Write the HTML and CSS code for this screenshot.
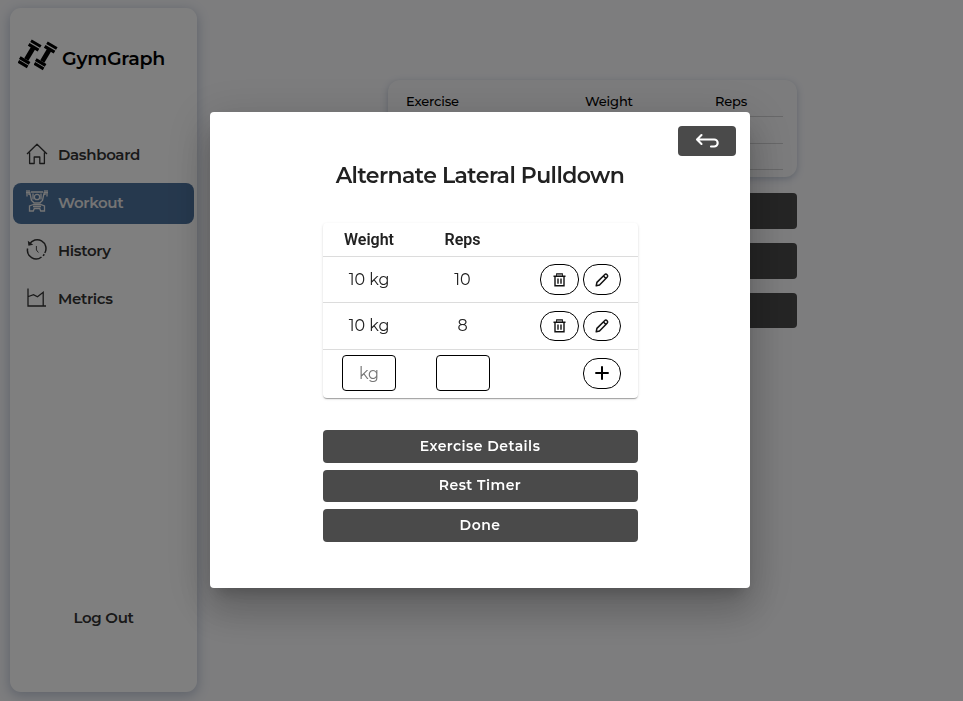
FILE: index.html
```
<!DOCTYPE html>
<html lang="en">
<head>
<meta charset="utf-8">
<title>GymGraph</title>
<link rel="stylesheet" href="styles.css">
</head>
<body>
<svg width="0" height="0" class="defs">
  <symbol id="trash" viewBox="0 0 16 16"><path d="M1.500 4.300h12M4.800 4V2h5.400v2M3 4.500v9.200h9V4.500M6 6.500v5.200M9 6.500v5.200" fill="none" stroke="currentColor" stroke-width="1.400"/><path d="M5 2h5v2H5z" fill="#777"/></symbol>
  <symbol id="pencil" viewBox="0 0 16 16"><path d="M2.200 13.800l.7-3.400 7.700-7.700a1.600 1.600 0 0 1 2.500 2.500l-7.600 7.800zM9.500 4l2.700 2.700" fill="none" stroke="currentColor" stroke-width="1.500" stroke-linejoin="round"/></symbol>
  <symbol id="dumbbell" viewBox="0 0 24 32"><path d="M8.300 21.500L15.100 10" stroke="#000" stroke-width="4.800"/><path d="M10.700 6.300l9.800 5.800M1.800 19.600l9.800 5.800" stroke="#000" stroke-width="3.300"/><path d="M13 2.700l9.800 5.800M.4 23.400l9.200 5.500" stroke="#000" stroke-width="3"/></symbol>
</svg>
<div class="page">
  <nav class="sidebar">
    <div class="brand">
      <svg class="logo" viewBox="0 0 40 34"><use href="#dumbbell" x="0" y="0" width="24" height="32"/><use href="#dumbbell" x="16" y="2" width="24" height="32"/></svg>
      <span class="brand-name">GymGraph</span>
    </div>
    <a class="item"><svg viewBox="0 0 22 22"><path d="M1 11L11 1.200 21 11M3.600 9.500V20.500H8.200V14h5.600v6.500h4.600V9.500" fill="none" stroke="currentColor" stroke-width="1.300" stroke-linejoin="round"/></svg><span class="t-dash">Dashboard</span></a>
    <a class="item active"><svg viewBox="0 0 22 22"><g fill="none" stroke="currentColor" stroke-width="1.300"><path d="M1 0v6.500M21 0v6.500M0 2.500h4.500M17.500 2.500H22M3 0v5M19 0v5M4 3.500L5.500 10.500 8 12.800h6l2.500-2.300L18 3.500M5 2h12M7 3.500v6M15 3.500v6M7.500 14.500L3.500 16v5h3.800l1-2.500h5.400l1 2.500h3.800v-5l-4-1.500zM7 16.500h8"/><circle cx="11" cy="7" r="2.700"/></g></svg><span class="t-work">Workout</span></a>
    <a class="item"><svg viewBox="0 0 22 22"><g fill="none" stroke="currentColor" stroke-width="1.500"><path d="M3.500 5.200A8.700 8.700 0 0 1 18.800 14M18.300 15.200l-1.200 1.700M15.500 18A8.700 8.700 0 0 1 1.600 9.500"/><path d="M10.400 7v4l2 2.500" stroke-width=".9"/></g><path d="M1.800 1.700l.6 5 4.800-1z" fill="currentColor"/></svg><span class="t-hist">History</span></a>
    <a class="item"><svg viewBox="0 0 22 22"><path d="M2 1.500V19H20M2.500 9.500l5-1.900 4 2.200 5.700-4.500v13.700" fill="none" stroke="currentColor" stroke-width="1.300"/></svg><span class="t-metr">Metrics</span></a>
    <a class="logout">Log Out</a>
  </nav>
  <main class="content">
    <section class="card">
      <div class="card-row head"><span>Exercise</span><span>Weight</span><span>Reps</span></div>
      <div class="card-row"></div>
      <div class="card-row"></div>
    </section>
    <div class="bar"></div><div class="bar"></div><div class="bar last"></div>
  </main>
</div>
<div class="overlay">
  <div class="dialog">
    <div class="top"><button class="back"><svg viewBox="0 0 24 16"><path d="M6.500 2L2 6.500 6.500 11M2.500 6.500h16.700a3.500 3.500 0 0 1 0 7H16" fill="none" stroke="#fff" stroke-width="2.100" stroke-linecap="round" stroke-linejoin="round"/></svg></button></div>
    <h2 class="title">Alternate Lateral Pulldown</h2>
    <div class="sets">
      <div class="row head"><span>Weight</span><span>Reps</span></div>
      <div class="row first"><span>10 kg</span><span>10</span><div class="actions"><button class="pill wide"><svg><use href="#trash"/></svg></button><button class="pill"><svg><use href="#pencil"/></svg></button></div></div>
      <div class="row second"><span>10 kg</span><span>8</span><div class="actions"><button class="pill wide"><svg><use href="#trash"/></svg></button><button class="pill"><svg><use href="#pencil"/></svg></button></div></div>
      <div class="row"><input class="field" placeholder="kg"><input class="field"><div class="actions"><button class="pill"><svg viewBox="0 0 16 16"><path d="M8 1.300v13.400M1.300 8h13.400" stroke="#000" stroke-width="2"/></svg></button></div></div>
    </div>
    <div class="buttons">
      <button>Exercise Details</button>
      <button>Rest Timer</button>
      <button>Done</button>
    </div>
  </div>
</div>
</body>
</html>
```
FILE: styles.css
```
* { box-sizing: border-box; }
body { margin: 0; height: 701px; overflow: hidden; background: #fafafd; color: #212121; font-family: Montserrat, Inter, "Liberation Sans", sans-serif; }
button { border: 0; padding: 0; font: inherit; }
.defs { position: absolute; }
.page { display: flex; height: 701px; padding: 8px 0 9px 10px; }
.sidebar { display: flex; flex-direction: column; width: 187px; background: #fff; border-radius: 11px; box-shadow: 0 3px 12px 1px rgba(60, 85, 130, .3); padding: 30px 3px 0; }
.brand { display: flex; align-items: center; height: 34px; margin-bottom: 87px; padding-left: 5px; color: #000; }
.logo { width: 40px; height: 34px; }
.brand-name { margin: 6px 0 0 4px; font-size: 19px; font-weight: 600; letter-spacing: -.25px; }
.item { display: flex; align-items: center; height: 41px; margin-bottom: 7px; padding-left: 13px; border-radius: 8px; font-size: 15px; font-weight: 600; color: #333; }
.item:nth-of-type(1) { margin-top: -24px; }
.item svg { width: 22px; height: 22px; margin: -3px 10px 0 0; flex: none; }
.item.active svg { margin-top: -5px; }
.item span { margin-top: -2px; }
.item.active { background: #4d729d; color: #e8e8e8; }
.t-dash { letter-spacing: -.33px; }
.t-work { letter-spacing: -.35px; }
.t-hist { letter-spacing: -.35px; }
.t-metr { letter-spacing: -.35px; }
.logout { margin: auto 0 64px; text-align: center; font-size: 15px; font-weight: 600; line-height: 20px; letter-spacing: -.3px; color: #333; }
.content { width: 409px; margin: 72px 0 0 191px; }
.card { height: 97px; margin-bottom: 16px; padding: 7px 14px 0; border-radius: 12px; background: #f8f9fa; box-shadow: 0 2px 7px rgba(60, 85, 130, .3); }
.card-row { height: 26.500px; border-bottom: 1px solid #d0d0d2; font-size: 13px; font-weight: 500; color: #000; }
.card-row.head { display: grid; grid-template-columns: 179px 130px 1fr; height: 30px; padding-left: 4px; line-height: 29px; letter-spacing: -.15px; }
.bar { height: 36px; margin-bottom: 14px; border-radius: 4px; background: #4a4a4a; }
.bar.last { height: 35px; }
.overlay { position: fixed; inset: 0; display: flex; justify-content: center; align-items: center; padding: 0 3px 1px 0; background: rgba(0, 0, 0, .5); }
.dialog { width: 540px; height: 476px; border-radius: 4px; background: #fff; box-shadow: 0 11px 15px -7px rgba(0,0,0,.2), 0 24px 38px 3px rgba(0,0,0,.14), 0 9px 46px 8px rgba(0,0,0,.12); }
.top { display: flex; justify-content: flex-end; padding: 14px 14px 0; }
.back { display: grid; place-items: center; width: 58px; height: 30px; border-radius: 4px; background: #4a4a4a; }
.back svg { width: 24px; height: 16px; }
.title { margin: 4px 0 31px; text-align: center; font-size: 22px; line-height: 32px; font-weight: 600; letter-spacing: -.55px; white-space: nowrap; }
.sets { width: 315px; margin: 0 112px 0 113px; border-radius: 4px; box-shadow: 0 2px 1px -1px rgba(0,0,0,.2), 0 1px 1px rgba(0,0,0,.14), 0 1px 3px rgba(0,0,0,.12); }
.row { display: grid; grid-template-columns: 92px 95px 1fr; align-items: center; justify-items: center; border-bottom: 1px solid #dcdcdc; font-size: 16px; }
.row.head { height: 34px; font-family: Roboto, sans-serif; font-weight: 600; }
.row.first { height: 46px; }
.row.second { height: 47px; }
.row.second .pill { height: 30px; }
.row.second span { margin-top: -1px; }
.row:last-child { height: 48px; border: 0; padding-bottom: 2px; }
.actions { display: flex; justify-self: end; gap: 4px; padding-right: 17px; }
.pill { display: grid; place-items: center; width: 38px; height: 31px; border: 1px solid #000; border-radius: 15px; background: #fff; color: #111; }
.pill.wide { width: 39px; }
.pill svg { width: 16px; height: 16px; }
.field { width: 54px; height: 36px; border: 1px solid #000; border-radius: 4px; text-align: center; font: 16px Montserrat, Inter, sans-serif; }
.field::placeholder { color: #757575; }
.buttons { display: flex; flex-direction: column; gap: 7px; width: 315px; margin: 32px 0 0 113px; }
.buttons button { height: 32.500px; padding: 0 1px 1px 0; border-radius: 4px; background: #4a4a4a; color: #fff; font-size: 14px; font-weight: 600; letter-spacing: .47px; }
```
